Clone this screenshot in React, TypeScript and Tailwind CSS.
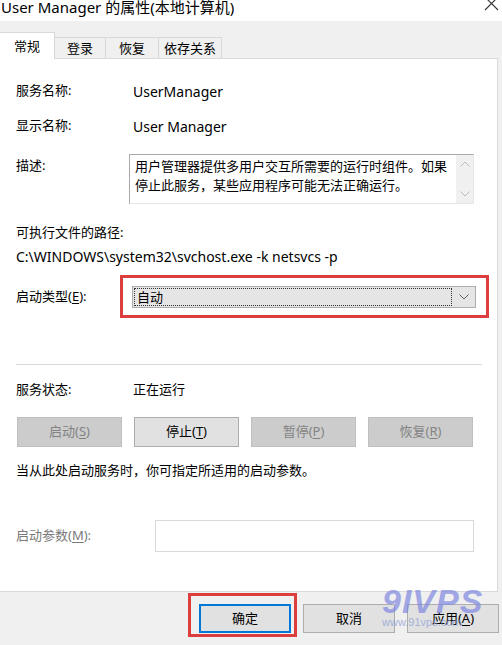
import React from "react";

const U = ({ c }: { c: string }) => <span className="underline underline-offset-[2px]">{c}</span>;

function Chevron({ down = true, color = "#606060" }: { down?: boolean; color?: string }) {
  return (
    <svg width="10" height="6" viewBox="0 0 10 6" fill="none">
      {down ? (
        <path d="M0.5 0.5 L5 5 L9.5 0.5" stroke={color} strokeWidth="1" />
      ) : (
        <path d="M0.5 5.5 L5 1 L9.5 5.5" stroke={color} strokeWidth="1" />
      )}
    </svg>
  );
}

export default function App() {
  const disabledBtn =
    "w-[105px] h-[30px] bg-[#cccccc] border border-[#bfbfbf] text-[#838383] flex items-center justify-center text-[13px]";
  const normalBtn =
    "w-[105px] h-[30px] bg-[#e1e1e1] border border-[#adadad] text-black flex items-center justify-center text-[13px]";
  const bottomBtn =
    "w-[92px] h-[29px] bg-[#e1e1e1] border border-[#adadad] text-black flex items-center justify-center text-[13px]";

  return (
    <div className="relative w-[502px] h-[645px] overflow-hidden bg-[#f0f0f0] text-black font-['Noto_Sans','Noto_Sans_CJK_SC',sans-serif]">
      {/* Title bar */}
      <div className="h-[22px] bg-white relative">
        <div className="pl-[1px] text-[15px] leading-[16px] -mt-[1px] whitespace-nowrap">
          User Manager 的属性(本地计算机)
        </div>
        <svg className="absolute left-[484px] -top-[3px]" width="15" height="15" viewBox="0 0 15 15">
          <path d="M1 1 L14 14 M14 1 L1 14" stroke="#333" strokeWidth="1.1" />
        </svg>
      </div>

      {/* Tabs */}
      <div className="h-[37px] flex items-end relative z-10">
        <div className="w-[55px] h-[27px] bg-white border-t border-r border-[#d9d9d9] flex items-start justify-center pt-[5px] text-[13px] leading-[16px] -mb-[1px]">
          常规
        </div>
        <div className="w-[51px] h-[21px] border-t border-r border-[#d9d9d9] flex items-start justify-center pt-[2px] text-[13px] leading-[16px]">
          登录
        </div>
        <div className="w-[53px] h-[21px] border-t border-r border-[#d9d9d9] flex items-start justify-center pt-[2px] text-[13px] leading-[16px]">
          恢复
        </div>
        <div className="w-[63px] h-[21px] border-t border-r border-[#d9d9d9] flex items-start justify-center pt-[2px] text-[13px] leading-[16px]">
          依存关系
        </div>
      </div>

      {/* Panel */}
      <div className="w-[498px] h-[534px] bg-white border-t border-r border-b border-[#d9d9d9] pl-[16px] pt-[22px] text-[13px]">
        <div className="h-[20px] flex items-center">
          <div className="w-[117px]">服务名称:</div>
          <div className="text-[14px]">UserManager</div>
        </div>
        <div className="h-[20px] mt-[15px] flex items-center">
          <div className="w-[117px]">显示名称:</div>
          <div className="text-[14px]">User Manager</div>
        </div>
        <div className="mt-[18px] flex items-start">
          <div className="w-[113px] h-[20px] mt-[2px] flex items-center">描述:</div>
          <div className="w-[345px] h-[50px] border-t border-l border-[#a9a9a9] border-b border-r border-b-[#e6e6e6] border-r-[#e6e6e6] flex">
            <div className="flex-1 pl-[5px] pt-[2px] leading-[19px]">
              用户管理器提供多用户交互所需要的运行时组件。如果
              <br />
              停止此服务，某些应用程序可能无法正确运行。
            </div>
            <div className="w-[17px] bg-[#f0f0f0] flex flex-col items-center justify-between pt-[6px] pb-[6px]">
              <Chevron down={false} color="#bcbcbc" />
              <Chevron down color="#bcbcbc" />
            </div>
          </div>
        </div>
        <div className="h-[20px] mt-[19px] flex items-center">可执行文件的路径:</div>
        <div className="h-[20px] mt-[3px] flex items-center whitespace-nowrap text-[14px]">
          C:\WINDOWS\system32\svchost.exe -k netsvcs -p
        </div>
        <div className="mt-[9px] flex items-center">
          <div className="w-[104px]">
            启动类型(<U c="E" />):
          </div>
          <div className="w-[369px] h-[43px] border-[3px] border-[#dc3d3d] flex items-center pl-[9px]">
            <div className="w-[344px] h-[22px] bg-[#e5e5e5] border border-[#adadad] flex items-center pl-[1px]">
              <div className="w-[318px] h-[18px] border border-dotted border-[#333] flex items-center pl-[2px] leading-[16px]">
                自动
              </div>
              <div className="flex-1 flex items-center justify-center">
                <Chevron down color="#606060" />
              </div>
            </div>
          </div>
        </div>
        <div className="mt-[46px] w-[466px] h-[1px] bg-[#d9d9d9]" />
        <div className="h-[20px] mt-[15px] flex items-center">
          <div className="w-[117px]">服务状态:</div>
          <div>正在运行</div>
        </div>
        <div className="mt-[17px] flex gap-[12px] pl-[1px]">
          <div className={disabledBtn}>
            启动(<U c="S" />)
          </div>
          <div className={normalBtn}>
            停止(<U c="T" />)
          </div>
          <div className={disabledBtn}>
            暂停(<U c="P" />)
          </div>
          <div className={disabledBtn}>
            恢复(<U c="R" />)
          </div>
        </div>
        <div className="h-[20px] mt-[14px] flex items-center">当从此处启动服务时，你可指定所适用的启动参数。</div>
        <div className="mt-[39px] flex items-center">
          <div className="w-[139px] text-[#7a7a7a]">
            启动参数(<U c="M" />):
          </div>
          <div className="w-[319px] h-[32px] border border-[#d9d9d9] bg-white" />
        </div>
      </div>

      {/* Bottom buttons */}
      <div className="mt-[12px] flex gap-[12px] pl-[199px]">
        <div className={bottomBtn + " !border-2 !border-[#0078d7]"}>确定</div>
        <div className={bottomBtn}>取消</div>
        <div className={bottomBtn}>
          应用(<U c="A" />)
        </div>
      </div>

      {/* Annotation around OK button */}
      <div className="absolute left-[188px] top-[593px] w-[109px] h-[44px] border-[3px] border-[#dc3d3d] pointer-events-none" />

      {/* Watermark */}
      <div className="absolute left-[382px] top-[585px] pointer-events-none opacity-70">
        <div className="text-[34px] leading-[32px] font-bold italic text-[#8088e0] font-['Liberation_Sans',sans-serif] tracking-[1px]">
          9IVPS
        </div>
        <div className="text-[11px] leading-[12px] text-[#8c9bd6] font-['Liberation_Sans',sans-serif] mt-[-1px]">
          www.91vps.com
        </div>
      </div>
    </div>
  );
}
